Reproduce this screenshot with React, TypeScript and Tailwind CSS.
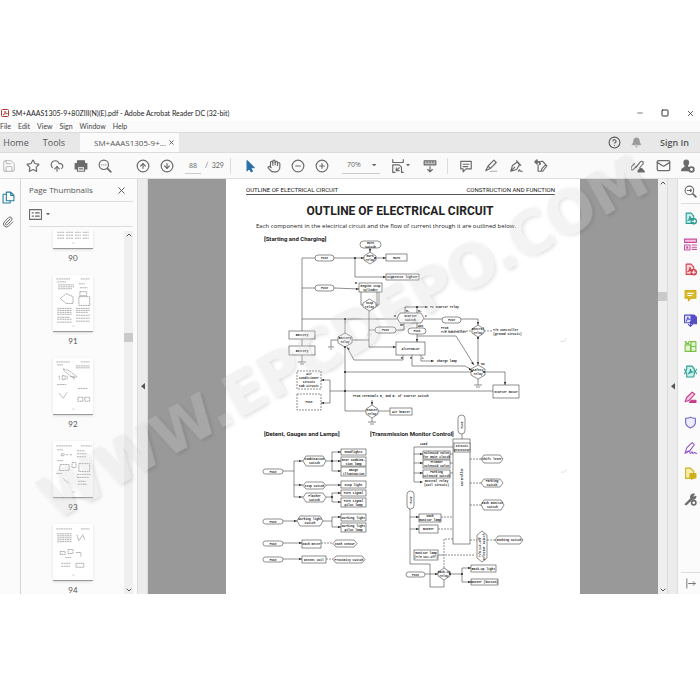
import React from "react";
import {
  Bell,
  ChevronDown,
  ChevronUp,
  CircleArrowDown,
  CircleArrowUp,
  CircleHelp,
  CircleMinus,
  CirclePlus,
  CloudUpload,
  Hand,
  Mail,
  Minus,
  Paperclip,
  Save,
  Square,
  Star,
  X,
} from "lucide-react";

type IconProps = { className?: string; color?: string; children: React.ReactNode };

function Icon({ className = "size-[14px]", color = "#6b6b6b", children }: IconProps) {
  return (
    <svg
      viewBox="0 0 24 24"
      className={className}
      fill="none"
      stroke={color}
      strokeWidth="2"
      strokeLinecap="round"
      strokeLinejoin="round"
      aria-hidden="true"
    >
      {children}
    </svg>
  );
}

function ToolButton({ label, children }: { label: string; children: React.ReactNode }) {
  return (
    <button type="button" aria-label={label} className="flex size-4 shrink-0 items-center justify-center text-[#6b6b6b]">
      {children}
    </button>
  );
}

function Caret({ className = "w-[5px]" }: { className?: string }) {
  return (
    <svg viewBox="0 0 8 5" className={className} aria-hidden="true">
      <path d="M0 0h8L4 5z" fill="#6b6b6b" />
    </svg>
  );
}

function TitleBar() {
  return (
    <header className="flex h-4 items-center pl-px">
      <svg viewBox="0 0 16 16" className="mr-[3px] size-[8px]" aria-hidden="true">
        <rect x="1" y="1" width="14" height="14" rx="2" fill="#fff" stroke="#b5362f" strokeWidth="2" />
        <path d="M4 12c3-2 4-5 4-8 0 3 2 5 5 5-3-1-6 1-9 3z" fill="none" stroke="#b5362f" strokeWidth="1.5" />
      </svg>
      <h1 className="font-['Lato',sans-serif] text-[7px] whitespace-nowrap text-[#222]">
        SM+AAAS1305-9+80ZIII(N)(E).pdf - Adobe Acrobat Reader DC (32-bit)
      </h1>
      <div className="ml-auto flex gap-[9px] pr-[2px] text-[#333]">
        <button type="button" aria-label="Minimize" className="flex size-4 items-center justify-center">
          <Minus size={8} />
        </button>
        <button type="button" aria-label="Maximize" className="flex size-4 items-center justify-center">
          <Square size={8} strokeWidth={3} />
        </button>
        <button type="button" aria-label="Close" className="flex size-4 items-center justify-center">
          <X size={9} />
        </button>
      </div>
    </header>
  );
}

function MenuBar() {
  return (
    <nav
      aria-label="Menu"
      className="flex h-[11px] items-center gap-[7px] bg-[#fafafa] font-['Lato',sans-serif] text-[7px] text-[#444]"
    >
      {["File", "Edit", "View", "Sign", "Window", "Help"].map((m) => (
        <button key={m} type="button">
          {m}
        </button>
      ))}
    </nav>
  );
}

function TabBar() {
  return (
    <div className="flex h-[21px] items-stretch border-y border-[#dcdcdc] bg-[#e8e8e8] text-[9px] text-[#555]">
      <button type="button" className="w-8">Home</button>
      <button type="button" className="w-[44px]">Tools</button>
      <div className="ml-1 flex w-[99px] items-center justify-between bg-[#fbfbfb] pr-1 pl-[14px]">
        <span className="text-[8px]">SM+AAAS1305-9+...</span>
        <button type="button" aria-label="Close tab">
          <X size={7} strokeWidth={3} />
        </button>
      </div>
      <div className="ml-auto flex items-center gap-[10px] pr-[11px]">
        <button type="button" aria-label="Help">
          <CircleHelp size={13} />
        </button>
        <button type="button" aria-label="Notifications" className="text-[#9a9a9a]">
          <Bell size={11} fill="currentColor" />
        </button>
        <button type="button" className="pl-2 font-semibold">Sign In</button>
      </div>
    </div>
  );
}

function Toolbar() {
  return (
    <div className="flex h-[26px] items-center border-b border-[#dedede] bg-[#fafafa] pl-px text-[7px] text-[#666]">
      <div className="flex gap-2">
        <ToolButton label="Save"><Save size={14} strokeWidth={1} color="#888" /></ToolButton>
        <ToolButton label="Star"><Star size={14} /></ToolButton>
        <ToolButton label="Upload"><CloudUpload size={14} /></ToolButton>
        <ToolButton label="Print">
          <Icon>
            <path d="M6 8V3h12v5M6 17H2V8h20v9h-4" fill="#6b6b6b" />
            <path d="M6 13h12v8H6z" fill="#fff" />
            <path d="M9 17h6" />
          </Icon>
        </ToolButton>
        <ToolButton label="Find">
          <Icon>
            <circle cx="10" cy="10" r="8" />
            <path d="M16 16l6 6" strokeWidth="3" />
            <path d="M6.500 10h.1M10 10h.1M13.500 10h.1" />
          </Icon>
        </ToolButton>
      </div>
      <div className="ml-[22px] flex gap-2">
        <ToolButton label="Previous page"><CircleArrowUp size={14} /></ToolButton>
        <ToolButton label="Next page"><CircleArrowDown size={14} /></ToolButton>
      </div>
      <input
        aria-label="Page number"
        defaultValue="88"
        className="ml-[10px] h-4 w-4 border-b border-[#ccc] text-center outline-none"
      />
      <span className="ml-1 w-[25px] font-['Lato',sans-serif] whitespace-pre">/  329</span>
      <i className="h-4 w-px bg-[#ddd]" />
      <div className="ml-[11px] flex gap-2">
        <ToolButton label="Select">
          <Icon color="#2a6ea6">
            <path d="M7 3v17l4-4 3 6 2-1-3-6h6z" fill="#2a6ea6" />
          </Icon>
        </ToolButton>
        <ToolButton label="Pan"><Hand size={14} /></ToolButton>
        <ToolButton label="Zoom out"><CircleMinus size={14} /></ToolButton>
        <ToolButton label="Zoom in"><CirclePlus size={14} /></ToolButton>
      </div>
      <div className="ml-3 flex h-4 w-[38px] items-center border-b border-[#ccc] pr-1 pl-[5px]">
        <select aria-label="Zoom level" className="w-full appearance-none outline-none">
          <option>70%</option>
        </select>
        <Caret />
      </div>
      <div className="ml-[10px] flex items-center">
        <ToolButton label="Fit page">
          <Icon>
            <path d="M3 1v5h18V1M3 23V10h11l4 4v9M3 23h4M18 23h3" />
            <path d="M9 15v5h5M9 20l5-5" />
          </Icon>
        </ToolButton>
        <Caret className="w-1" />
      </div>
      <div className="ml-3">
        <ToolButton label="Scroll pages">
          <Icon>
            <path d="M2 3h20v7H2zM7 3v3M12 3v3M17 3v3" fill="#bbb" />
            <path d="M12 13v9M8 18l4 4 4-4" />
          </Icon>
        </ToolButton>
      </div>
      <i className="ml-[9px] h-4 w-px bg-[#ddd]" />
      <div className="ml-[10px] flex gap-[9px]">
        <ToolButton label="Comment">
          <Icon><path d="M3 4h18v13h-9l-5 5v-5H3zM7 9h10M7 13h8" /></Icon>
        </ToolButton>
        <ToolButton label="Highlight">
          <Icon>
            <path d="M3 20l4-8L17 2l4 4-10 10zM7 12l4 4" />
            <path d="M11 21h11" stroke="#aaa" />
          </Icon>
        </ToolButton>
        <ToolButton label="Sign">
          <Icon>
            <path d="M3 21l3-10 8-6 4 5-5 8zM3 21l7-7M13 3l7 8M16 21c1-3 3-3 3 0h4" />
          </Icon>
        </ToolButton>
        <ToolButton label="More tools">
          <Icon>
            <path d="M7 10v11h8l7-9-7-8h-3M12 21l2-5 5-5" />
            <path d="M2 5h8v4M5 2L2 5l3 3" strokeWidth="3" />
          </Icon>
        </ToolButton>
      </div>
      <div className="ml-auto flex gap-[9px] pr-1">
        <ToolButton label="Share link">
          <Icon>
            <path d="M9 14l7-9c3-3 7 1 4 4l-5 6M13 9l-8 8c-3 4-7 0-4-4l5-5" />
            <path d="M12 22c0-5 4-4 4-6 4 0 5 3 7 6z" fill="#6b6b6b" />
          </Icon>
        </ToolButton>
        <ToolButton label="Send email"><Mail size={15} /></ToolButton>
        <ToolButton label="Add people">
          <Icon>
            <path d="M9 2c5 0 5 6 2 9v3h2v6H1c0-5 4-4 6-6v-3C4 8 4 2 9 2z" fill="#6b6b6b" />
            <circle cx="18" cy="18" r="4" fill="#fff" strokeWidth="3" />
          </Icon>
        </ToolButton>
      </div>
    </div>
  );
}

const THUMBS = [
  {
    page: 90,
    art: "M4 38h7M13 38h7M22 38h6M30 38h6M4 41h7M13 41h7M22 41h6M30 41h6M4 44h7M13 44h7M22 44h6M30 44h6M4 47h7M13 47h7M22 47h6M30 47h6",
  },
  {
    page: 91,
    art: "M3 4h14M28 4h9M4 7h9M5 10h16M5 12h16M5 14h14M26 9h6M27 13h8M27 17h7v4h-7zM7 24l6-5 7 3v7h-7zM26 22h11v9H26zM4 34h15M4 36h15M4 38h15M4 40h15M4 43h13M4 45h15M4 48h15M23 34h14M23 36h14M23 38h12M23 41h14M23 44h14M23 47h14",
  },
  {
    page: 92,
    art: "M3 4h14M28 4h9M4 7h6M23 8h14M23 10h14M10 11l6 2 8 6-4 1-8-6zM6 18v4M9 18h3v4H9zM14 18v4M17 19h4v3M4 27h9M25 31h10M6 36l4 5 4-6M25 40h5v4h-5zM32 40h5v4h-5z",
  },
  {
    page: 93,
    art: "M3 5h16M28 5h11M4 9h6M8 13h3v2H8zM13 14h2M17 14h2M24 10h8M24 13h10M24 16h9M4 20h6M7 24h9v6H6zM19 22h4v5h-4zM26 23h11v8H26zM3 33h6M24 34h14M24 37h12M10 38l5 5M25 41h8M25 44h9",
  },
  {
    page: 94,
    art: "M3 5h16M28 5h9M4 10h15M4 12h15M4 14h15M4 16h15M4 18h15M24 11l2 6 4-6 2 5M7 28h5v3H7zM15 26h5v4h-5zM23 29h5v4M12 34h6M8 40h10M8 43h9M23 40h8v4h-8z",
  },
];

function ScrollBar({ thumbOffset }: { thumbOffset: string }) {
  return (
    <div className="flex w-[9px] shrink-0 flex-col items-center bg-[#efefef] text-[#555]">
      <ChevronUp size={8} strokeWidth={3} />
      <div className="w-full flex-1">
        <div className={`${thumbOffset} h-[9px] w-full bg-[#cacaca]`} />
      </div>
      <ChevronDown size={8} strokeWidth={3} />
    </div>
  );
}

function ThumbnailPanel() {
  return (
    <aside className="flex w-[116px] shrink-0 flex-col bg-[#fbfbfb] pr-1 pl-2">
      <div className="flex h-[23px] items-center justify-between border-b border-[#ddd] pr-[6px]">
        <h2 className="text-[8px] text-[#555]">Page Thumbnails</h2>
        <button type="button" aria-label="Close panel">
          <X size={11} color="#555" />
        </button>
      </div>
      <button type="button" aria-label="Thumbnail options" className="flex h-[25px] items-center gap-1 border-b border-[#ddd]">
        <Icon className="size-[13px]">
          <path d="M1 3h22v18H1zM6 9h2M6 15h2M12 9h7M12 15h7" />
        </Icon>
        <Caret className="w-1" />
      </button>
      <div className="mt-1 flex h-0 grow">
        <div className="flex-1 overflow-hidden">
          <ul className="-mt-[39px] flex flex-col gap-[11px] pl-[24px]">
            {THUMBS.map((t) => (
              <li key={t.page} className="flex w-10 flex-col items-center gap-[3px]">
                <svg viewBox="0 0 40 57" className="h-[57px] w-10 border-b border-[#999] bg-white shadow" aria-hidden="true">
                  <path d={t.art} fill="none" stroke="#999" strokeWidth=".8" strokeDasharray="2 .5" />
                  <path d="M19 52h3" stroke="#bbb" strokeWidth=".6" />
                </svg>
                <span className="font-['Lato',sans-serif] text-[8px] leading-3 text-[#555]">{t.page}</span>
              </li>
            ))}
          </ul>
        </div>
        <ScrollBar thumbOffset="mt-[94px]" />
      </div>
    </aside>
  );
}

type Shape = "box" | "dashed" | "pill" | "hex" | "round" | "bare";
type Node = [shape: Shape, x: number, y: number, w: number, h: number, text: string];

// Coordinates share the space of the circuit viewBox; "|" breaks a line.
const NODES: Node[] = [
  ["pill", 360, 241, 21, 7, "Horn|switch"],
  ["round", 364, 252, 12, 12, "Horn|relay"],
  ["pill", 315, 255, 19, 6, "Fuse"],
  ["box", 386, 254, 21, 7, "Horn"],
  ["box", 386, 274, 33, 6, "Cigarette lighter"],
  ["pill", 315, 285, 19, 6, "Fuse"],
  ["box", 359, 283, 23, 9, "Engine stop|cylinder"],
  ["round", 363, 299, 13, 12, "Stop|relay"],
  ["hex", 397, 313, 27, 10, "Starter|switch"],
  ["pill", 375, 327, 21, 6, "Fuse"],
  ["pill", 408, 328, 18, 6, "Fuse"],
  ["pill", 442, 317, 19, 6, "Fuse"],
  ["box", 289, 331, 26, 8, "Battery"],
  ["box", 289, 346, 26, 9, "Battery"],
  ["round", 338, 333, 14, 14, "Battery|relay"],
  ["round", 472, 325, 12, 12, "Neutral|relay"],
  ["box", 396, 342, 29, 13, "Alternator"],
  ["dashed", 297, 371, 24, 18, "Air|conditioner|circuit|Cab circuit"],
  ["dashed", 297, 394, 24, 16, "Fuse"],
  ["round", 471, 365, 14, 14, "Safety|relay"],
  ["box", 493, 385, 26, 13, "Starter motor"],
  ["round", 366, 405, 12, 13, "Heater|relay"],
  ["box", 390, 408, 22, 7, "Air heater"],
  ["pill", 263, 469, 20, 5, "Fuse"],
  ["hex", 303, 456, 23, 10, "Combination|switch"],
  ["hex", 303, 482, 23, 7, "Stop switch"],
  ["hex", 303, 493, 23, 9, "Flasher|switch"],
  ["box", 341, 449, 25, 6, "Headlights"],
  ["box", 341, 457, 25, 9, "Rear combina-|tion lamp"],
  ["box", 341, 467, 25, 9, "Gauge|illumination"],
  ["box", 341, 481, 25, 7, "Stop light"],
  ["box", 341, 490, 25, 6, "Turn signal"],
  ["box", 341, 498, 25, 9, "Turn signal|pilot lamp"],
  ["pill", 263, 519, 20, 5, "Fuse"],
  ["hex", 297, 516, 26, 10, "Working light|switch"],
  ["box", 341, 514, 25, 7, "Working light"],
  ["box", 341, 523, 25, 9, "Working light|pilot lamp"],
  ["pill", 263, 541, 20, 5, "Fuse"],
  ["box", 302, 540, 19, 8, "Cash meter"],
  ["hex", 333, 540, 24, 7, "Cash sensor"],
  ["pill", 263, 557, 20, 5, "Fuse"],
  ["box", 302, 556, 24, 7, "Detent coil"],
  ["hex", 333, 556, 32, 7, "Proximity switch"],
  ["box", 453, 439, 17, 105, ""],
  ["box", 454, 443, 16, 9, "Circuit|protector"],
  ["box", 423, 451, 27, 8, "Solenoid valve|for main clutch"],
  ["box", 423, 460, 27, 8, "Trimmer|solenoid valve"],
  ["box", 423, 470, 27, 8, "Parking|solenoid switch"],
  ["bare", 423, 479, 27, 8, "Neutral relay|(coil circuit)"],
  ["hex", 481, 455, 22, 8, "Shift lever"],
  ["hex", 481, 479, 22, 8, "Parking|switch"],
  ["hex", 481, 500, 23, 10, "Cash monitor|switch"],
  ["hex", 495, 536, 28, 8, "Inching switch"],
  ["box", 419, 514, 22, 8, "Cash|monitor lamp"],
  ["box", 419, 525, 19, 8, "Buzzer"],
  ["box", 414, 550, 24, 10, "Monitor lamp|(T/M cut-off)"],
  ["pill", 406, 572, 19, 5, "Fuse"],
  ["round", 438, 568, 12, 12, "Back-up|relay"],
  ["box", 471, 565, 25, 7, "Back-up light"],
  ["box", 471, 579, 27, 6, "Buzzer (button)"],
];

const WIRES = [
  "M302 331V258H315M334 258H386M355 258V277H386M302 288H315M334 288L359 289M370 248V252",
  "M361 292V305H363M377 292V307M379 292V305H376M369 311V347H396M302 319H397M302 339V346M302 355V362",
  "M298 362H306M300 364H304M331 340H338M331 340V347M328 347H334M330 349H332M352 340H369M345 319V411H366M345 372H471",
  "M405 313V307H428M417 307V328M369 330H375M396 330H404V323M417 334V342M417 336H456L474 365M424 319H442M461 319H478V325M478 337V365",
  "M421 355V361H434M412 355V366H465L472 370M403 355V360H354L347 347M485 372H505V385M478 379V385M474 385H482M476 387H480",
  "M321 380H330V403H321M330 391H493M378 411H390M372 400V405M372 418V422M368 422H376M370 424H374",
  "M283 471H294M303 461H294V497H303M294 485H303M326 461H341M341 452H332V471H341M326 485H341M326 497H332M341 493H332V502H341",
  "M283 521H297M323 521H332M341 517H332V527H341M283 543H302M283 559H302",
  "M462 434V443M453 447H414V482H422M414 454H423M414 463H423M414 473H423M450 454H453M450 463H453M450 473H453",
  "M410 509V564H430V587H444V580M410 517H419M410 529H419M438 555H442M425 574H438M450 574H462M471 568H462V582H471",
];

const DASHED_WIRES =
  "M445 331H472M484 331H492M321 543H333M326 559H333M470 459H481M470 483H481M470 505H481M470 540H477M487 540H495M441 517H453M438 529H453M453 539H444V568M442 555H474";

const ARROWS: [number, number][] = [
  [364, 258], [386, 258], [386, 277], [359, 289], [396, 347], [428, 307], [434, 361], [302, 461],
  [302, 485], [302, 497], [341, 452], [341, 461], [341, 471], [341, 485], [341, 493], [341, 502],
  [297, 521], [341, 517], [341, 527], [302, 543], [302, 559], [423, 454], [423, 463], [423, 473],
  [423, 482], [419, 517], [419, 529], [438, 574], [471, 568], [471, 582],
];

const DOTS: [number, number][] = [
  [355, 258], [375, 258], [345, 319], [345, 347], [345, 372], [345, 391], [417, 307], [332, 461],
  [332, 497], [472, 371], [484, 372], [478, 338], [450, 574], [462, 574],
];

const LABELS: [number, number, string][] = [
  [430, 308, "To starter relay"],
  [441, 329, "From"],
  [441, 333, "T/M controller"],
  [493, 331, "T/M controller"],
  [493, 335, "(ground circuit)"],
  [437, 362, "Charge lamp"],
  [353, 397, "From terminals R, and B₄ of starter switch"],
  [420, 445, "Load"],
  [406, 312, "R₁"],
  [418, 312, "R₂"],
  [394, 317, "B"],
  [425, 317, "C"],
  [418, 327, "ACC"],
  [400, 326, "BR"],
  [481, 365, "SW"],
  [355, 284, "B"],
  [401, 359, "E"],
  [410, 359, "R"],
  [422, 359, "L"],
];

function CircuitNode({ node: [shape, x, y, w, h, text] }: { node: Node }) {
  const lines = text.split("|");
  const cut = shape === "round" ? 4 : 3;
  const mid = y + h / 2;
  const hex = `M${x} ${mid}L${x + cut} ${y}H${x + w - cut}L${x + w} ${mid}L${x + w - cut} ${y + h}H${x + cut}Z`;
  const oct = `M${x} ${y + h - cut}V${y + cut}L${x + w / 2} ${y}L${x + w} ${y + cut}V${y + h - cut}L${x + w / 2} ${y + h}Z`;
  return (
    <g>
      {shape === "hex" && <path d={hex} />}
      {shape === "round" && <path d={oct} />}
      {(shape === "box" || shape === "dashed" || shape === "pill") && (
        <rect
          x={x}
          y={y}
          width={w}
          height={h}
          rx={shape === "pill" ? h / 2 : 0}
          strokeDasharray={shape === "dashed" ? "2 1" : undefined}
        />
      )}
      {lines.map((line, i) => (
        <text
          key={line}
          x={x + w / 2}
          y={mid + 1 + (i - (lines.length - 1) / 2) * 4}
          textAnchor="middle"
          fill="#222"
          stroke="none"
          className="text-[3px] font-bold"
        >
          {line}
        </text>
      ))}
    </g>
  );
}

function VerticalText({ x, y, children }: { x: number; y: number; children: string }) {
  return (
    <text transform={`translate(${x} ${y}) rotate(-90)`} textAnchor="middle" fill="#222" stroke="none" className="text-[3px] font-bold">
      {children}
    </text>
  );
}

function CircuitDiagram() {
  return (
    <svg
      viewBox="226 233 354 361"
      className="block w-full font-['Liberation_Mono',monospace]"
      fill="none"
      stroke="#444"
      strokeWidth=".6"
      role="img"
      aria-label="Electrical circuit diagram"
    >
      <g fill="#222" stroke="none" className="font-['Roboto',sans-serif] text-[6px] font-bold">
        <text x="264" y="241">[Starting and Charging]</text>
        <text x="264" y="436">[Detent, Gauges and Lamps]</text>
        <text x="370" y="436">[Transmission Monitor Control]</text>
      </g>
      {WIRES.map((d) => (
        <path key={d} d={d} />
      ))}
      <path d={DASHED_WIRES} strokeDasharray="2 1" />
      <g fill="#fff">
        {NODES.map((n) => (
          <CircuitNode key={`${n[1]}-${n[2]}`} node={n} />
        ))}
        <rect x="458" y="415" width="7" height="19" rx="3.5" />
        <rect x="407" y="491" width="7" height="18" rx="3.5" />
        <path d="M482 531l5 4v23l-5 4-5-4v-23z" />
      </g>
      <VerticalText x={463} y={425}>Fuse</VerticalText>
      <VerticalText x={412} y={500}>Fuse</VerticalText>
      <VerticalText x={463} y={477}>Controller</VerticalText>
      <VerticalText x={481} y={547}>T/M cut-off</VerticalText>
      <VerticalText x={485} y={547}>selector switch</VerticalText>
      <g fill="#222" stroke="none">
        {ARROWS.map(([x, y]) => (
          <path key={`${x}-${y}`} d={`M${x} ${y}l-3-1v2z`} />
        ))}
        {DOTS.map(([x, y]) => (
          <circle key={`${x}-${y}`} cx={x} cy={y} r="1" />
        ))}
        <path d="M321 380l3-1v2zM321 403l3-1v2zM370 252l-1-3h2zM478 325l-1-3h2zM478 365l-1-3h2zM505 385l-1-3h2zM417 342l-1-3h2zM372 405l-1-3h2zM472 370l-3-2v2zM474 365l-3-2 2-1zM347 347l3 2-2 1z" />
        {LABELS.map(([x, y, text]) => (
          <text key={`${x}-${y}`} x={x} y={y} className="text-[3px] font-bold">
            {text}
          </text>
        ))}
      </g>
      <path d="M367 334l2 3 2-3zM560 341q6 2 6-3M561 472q5 1 5-3" stroke="#ccc" />
    </svg>
  );
}

function DocumentPage() {
  return (
    <article className="w-[354px] max-w-full bg-white text-[#222]">
      <div className="mr-[25px] ml-5 flex h-4 items-end justify-between border-b border-[#555] font-['Roboto',sans-serif] text-[6px] leading-[9px]">
        <span>OUTLINE OF ELECTRICAL CIRCUIT</span>
        <span>CONSTRUCTION AND FUNCTION</span>
      </div>
      <h2 className="mt-2 pr-[6px] text-center font-['Roboto',sans-serif] text-[12px] leading-4 font-bold">
        OUTLINE OF ELECTRICAL CIRCUIT
      </h2>
      <p className="mt-[3px] mb-[2px] pl-[30px] text-[6px] leading-[9px] whitespace-nowrap">
        Each component in the electrical circuit and the flow of current through it are outlined below.
      </p>
      <CircuitDiagram />
    </article>
  );
}

function Gutter({ label }: { label: string }) {
  return (
    <button
      type="button"
      aria-label={label}
      className="flex w-[11px] shrink-0 items-center justify-center border-x border-[#dcdcdc] bg-[#ececec]"
    >
      <svg viewBox="0 0 5 8" className="w-[4px]" aria-hidden="true">
        <path d="M5 0v8L0 4z" fill="#555" />
      </svg>
    </button>
  );
}

const PDF_PAGE = "M4 2h9l5 5v14H4z";
const PDF_MARK = "M7 16c3-2 4-5 4-8 0 3 2 5 5 5-3 0-6 1-9 3z";

const RAIL_TOOLS = [
  { label: "Export PDF", color: "#2d9c94", art: <><path d={PDF_PAGE} fill="#c9efec" /><path d={PDF_MARK} /><circle cx="18" cy="17" r="5" fill="#2d9c94" /><path d="M15 17h6M19 15l2 2-2 2" stroke="#fff" /></> },
  { label: "Edit PDF", color: "#cb4f9f", art: <><path d="M1 2h22v6H1z" fill="#f3c6e2" /><path d="M1 13h10v9H1zM5 16h2v3H5zM15 13h8M15 17h8M15 21h8" /></> },
  { label: "Create PDF", color: "#d2424f", art: <><path d={PDF_PAGE} fill="#fbd5d8" /><path d={PDF_MARK} /><circle cx="18" cy="17" r="5" fill="#d2424f" /><path d="M18 14v6M15 17h6" stroke="#fff" /></> },
  { label: "Comment", color: "#cfae1c", art: <><path d="M2 3h20v14h-9l-5 5v-5H2z" fill="#d9b92b" /><path d="M7 8h10M7 12h7" stroke="#fff" /></> },
  { label: "Combine files", color: "#554fc7", art: <><path d="M12 2h7l4 4v12H12z" fill="#554fc7" /><path d="M1 2h12v14H1z" fill="#e1e0fb" /><path d="M4 13c2-2 3-4 3-7 0 3 1 4 4 4M12 14v8M8 19l4 4 4-4" /></> },
  { label: "Organize pages", color: "#7cc04a", art: <><path d="M2 9h10v12H2zM13 3h9v18h-9z" fill="#e1f5d0" /><path d="M13 12h9M2 3h2M9 3h3M3 5l6 2M9 5L3 7" /></> },
  { label: "Compress PDF", color: "#2d9c94", art: <><path d="M5 7V2h10l4 5v10l-1 5H5v-5l-2-5z" fill="#c9efec" /><path d="M8 16c3-2 4-5 4-8 0 3 2 5 4 5-3 0-5 1-8 3zM1 8l2 4-2 4M23 8l-2 4 2 4" /></> },
  { label: "Redact", color: "#c73b8c", art: <><path d="M2 20l3-8L15 2l5 4-10 11z" fill="#f3c6e2" /><path d="M10 21h12v-4h-8z" fill="#c73b8c" /></> },
  { label: "Protect", color: "#6a66c9", art: <path d="M12 2c3 2 6 2 9 2v8c0 5-4 8-9 10-5-2-9-5-9-10V4c3 0 6 0 9-2z" fill="#eceafb" /> },
  { label: "Fill and sign", color: "#9256c9", art: <path d="M2 21l3-10L15 1l4 4-8 11zM2 21c5-5 9-6 9-2 0 3 2 2 4-1 1 4 2 4 4 1 1 2 2 2 4 2" /> },
  { label: "Send for comments", color: "#cfae1c", art: <><path d="M3 2h9l6 6v13H3z" fill="#f7eda9" /><path d="M11 12h11v8h-5l-3 3v-3h-3z" fill="#cfae1c" /></> },
  { label: "More tools", color: "#6b6b6b", art: <><path d="M2 21L13 10M13 10c-3-5 2-9 6-8l-3 4 2 2 4-2c0 4-3 6-6 5L4 22z" fill="#6b6b6b" /><circle cx="18" cy="18" r="4" fill="#fff" strokeWidth="3" /></> },
];

function ToolRail() {
  return (
    <aside className="flex w-[22px] shrink-0 flex-col items-center bg-[#fbfbfb] pl-[3px]">
      <button type="button" aria-label="Search tools" className="flex h-[25px] w-full items-center justify-center border-b border-[#ddd]">
        <Icon className="size-[13px]">
          <circle cx="10" cy="10" r="8" />
          <path d="M16 16l6 6" strokeWidth="3" />
          <path d="M6 10h8M12 8l2 2-2 2" />
        </Icon>
      </button>
      <div className="mt-2 flex h-[294px] flex-col justify-between">
        {RAIL_TOOLS.map((t) => (
          <button key={t.label} type="button" aria-label={t.label}>
            <Icon className="size-[13px]" color={t.color}>{t.art}</Icon>
          </button>
        ))}
      </div>
      <button type="button" aria-label="Collapse tools" className="mt-auto flex h-[22px] w-full items-center justify-center border-t border-[#ddd]">
        <Icon className="size-[11px]">
          <path d="M4 2v20M8 12h14M18 8l4 4-4 4" />
        </Icon>
      </button>
    </aside>
  );
}

function Watermark() {
  return (
    <svg viewBox="0 0 700 700" className="pointer-events-none absolute top-0 left-0 w-[700px]" aria-hidden="true">
      <filter id="emboss" x="-5%" y="-30%" width="110%" height="160%">
        <feGaussianBlur in="SourceAlpha" stdDeviation="2" result="soft" />
        <feOffset in="soft" dx="1" dy="2" result="low" />
        <feComposite in="low" in2="SourceAlpha" operator="out" result="edge" />
        <feComponentTransfer in="edge" result="shade">
          <feFuncA type="linear" slope=".14" />
        </feComponentTransfer>
        <feComponentTransfer in="SourceGraphic" result="face">
          <feFuncA type="linear" slope=".26" />
        </feComponentTransfer>
        <feMerge>
          <feMergeNode in="shade" />
          <feMergeNode in="face" />
        </feMerge>
      </filter>
      <text
        transform="translate(54 521) rotate(-29)"
        fill="#d2d2d2"
        filter="url(#emboss)"
        className="font-['DejaVu_Sans',sans-serif] text-[58px] font-bold"
      >
        WWW.EPCDEPO.COM
      </text>
    </svg>
  );
}

export default function App() {
  return (
    <div className="relative min-h-screen overflow-hidden bg-white pt-[105px] font-['Open_Sans',sans-serif]">
      <TitleBar />
      <MenuBar />
      <TabBar />
      <Toolbar />
      <main className="flex">
        <div className="flex w-[21px] shrink-0 flex-col items-center gap-3 border-r border-[#d5d5d5] bg-[#fbfbfb] pt-3 pr-1">
          <button type="button" aria-label="Page thumbnails">
            <Icon className="size-[13px]" color="#2a7f9e">
              <path d="M8 2h8l6 6v10H8zM16 2v6h6" />
              <path d="M8 6H2v16h13v-4" />
            </Icon>
          </button>
          <button type="button" aria-label="Attachments">
            <Paperclip size={12} color="#6b6b6b" />
          </button>
        </div>
        <ThumbnailPanel />
        <Gutter label="Collapse navigation pane" />
        <section aria-label="Document" className="flex min-w-0 flex-1 justify-center bg-[#999]">
          <DocumentPage />
        </section>
        <ScrollBar thumbOffset="mt-[105px]" />
        <Gutter label="Expand tools pane" />
        <ToolRail />
      </main>
      <Watermark />
    </div>
  );
}
